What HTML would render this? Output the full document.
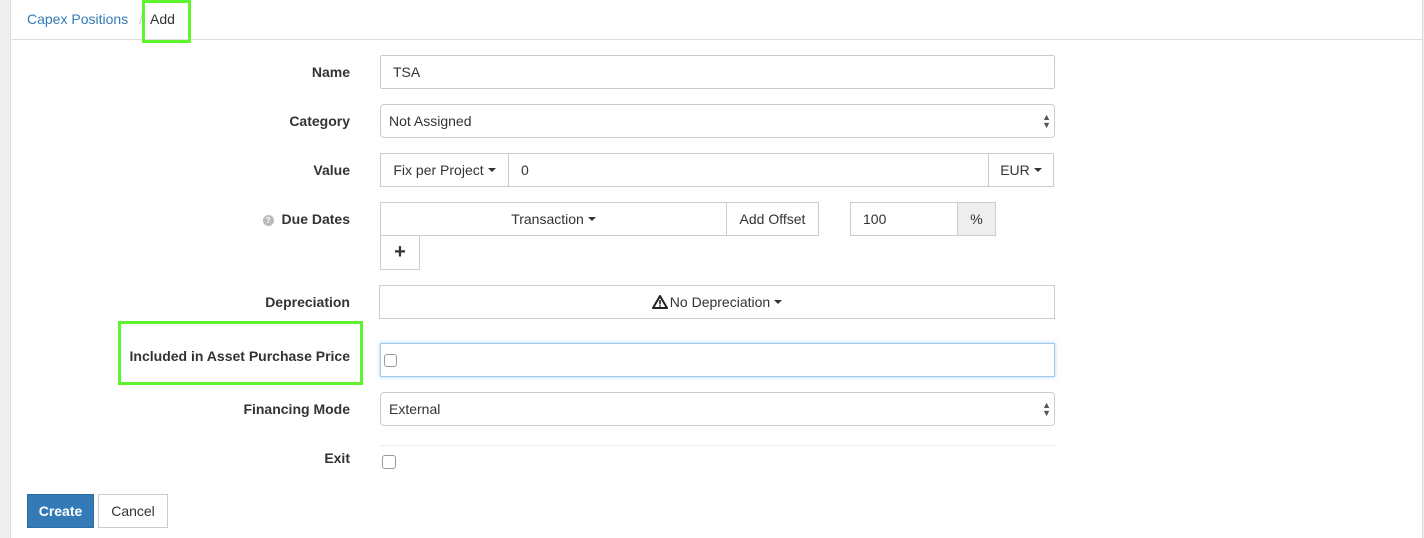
<!DOCTYPE html>
<html><head><style>
body{margin:0;width:1424px;height:538px;background:#fff;font-family:"Liberation Sans",Arial,sans-serif;font-size:14px;color:#333;position:relative;overflow:hidden}
.a{position:absolute;box-sizing:border-box}
.lbl{position:absolute;right:1074px;font-weight:bold;text-align:right;white-space:nowrap}
.bx{position:absolute;box-sizing:border-box;border:1px solid #ccc;background:#fff;display:flex;align-items:center}
.car{display:inline-block;width:0;height:0;border-left:4px solid transparent;border-right:4px solid transparent;border-top:4px solid #333;margin-left:4px;vertical-align:middle}
.sel{border-radius:4px;padding-left:8px}
.arr{position:absolute;right:3px;top:8px;font-size:9px;line-height:8px;color:#555}
.green{position:absolute;box-sizing:border-box;border:3px solid #5ef52e}
</style></head><body>
<div class="a" style="left:0;top:0;width:11px;height:538px;background:#eee;border-right:1px solid #ddd"></div>
<div class="a" style="left:1422px;top:0;width:2px;height:538px;background:#eee;border-left:1px solid #ddd"></div>
<div class="a" style="left:12px;top:39px;width:1410px;height:1px;background:#ddd"></div>
<div class="a" style="left:27px;top:11px;color:#337ab7">Capex Positions</div>
<div class="a" style="left:139px;top:11px;color:#ccc">/</div>
<div class="a" style="left:150px;top:11px;color:#333">Add</div>
<div class="green" style="left:142px;top:0;width:49px;height:43px"></div>

<div class="lbl" style="top:64px">Name</div>
<div class="bx" style="left:380px;top:55px;width:675px;height:34px;padding-left:12px;border-radius:2px">TSA</div>

<div class="lbl" style="top:113px">Category</div>
<div class="bx sel" style="left:380px;top:104px;width:675px;height:34px">Not Assigned<div class="arr">▲<br>▼</div></div>

<div class="lbl" style="top:162px">Value</div>
<div class="bx" style="left:380px;top:153px;width:129px;height:34px;justify-content:center">Fix per Project<span class="car"></span></div>
<div class="bx" style="left:508px;top:153px;width:481px;height:34px;padding-left:12px">0</div>
<div class="bx" style="left:988px;top:153px;width:66px;height:34px;justify-content:center">EUR<span class="car"></span></div>

<div class="lbl" style="top:211px"><span style="display:inline-block;width:11px;height:11px;border-radius:50%;background:#bbb;color:#fff;font-size:8px;line-height:11px;text-align:center;margin-right:8px;vertical-align:1px">?</span>Due Dates</div>
<div class="bx" style="left:380px;top:202px;width:347px;height:34px;justify-content:center">Transaction<span class="car"></span></div>
<div class="bx" style="left:726px;top:202px;width:93px;height:34px;justify-content:center">Add Offset</div>
<div class="bx" style="left:850px;top:202px;width:108px;height:34px;padding-left:12px">100</div>
<div class="bx" style="left:957px;top:202px;width:39px;height:34px;justify-content:center;background:#eee">%</div>
<div class="bx" style="left:380px;top:235px;width:40px;height:35px;justify-content:center;font-weight:bold;font-size:20px">+</div>

<div class="lbl" style="top:294px">Depreciation</div>
<div class="bx" style="left:379px;top:285px;width:676px;height:34px;justify-content:center"><svg width="16" height="14" viewBox="0 0 16 14" style="margin-right:2px"><path d="M8 1L15 13H1Z" fill="none" stroke="#222" stroke-width="2" stroke-linejoin="round"/><rect x="7.2" y="5" width="1.6" height="4.5" fill="#222"/><rect x="7.2" y="10.3" width="1.6" height="1.5" fill="#222"/></svg>No Depreciation<span class="car"></span></div>

<div class="lbl" style="top:348px">Included in Asset Purchase Price</div>
<div class="green" style="left:118px;top:321px;width:245px;height:64px"></div>
<div class="bx" style="left:380px;top:343px;width:675px;height:34px;border-color:#9ec8ee;box-shadow:0 0 4px rgba(102,175,233,.5)"><span style="position:absolute;left:3px;top:10px;width:13px;height:13px;border:1px solid #999;border-radius:3px;box-sizing:border-box"></span></div>

<div class="lbl" style="top:401px">Financing Mode</div>
<div class="bx sel" style="left:380px;top:392px;width:675px;height:34px">External<div class="arr">▲<br>▼</div></div>

<div class="lbl" style="top:450px">Exit</div>
<div class="a" style="left:380px;top:445px;width:675px;height:1px;background:#eee"></div>
<div class="a" style="left:382px;top:455px;width:14px;height:14px;border:1px solid #999;border-radius:3px"></div>

<div class="a" style="left:27px;top:494px;width:67px;height:34px;background:#337ab7;border:1px solid #2e6da4;color:#fff;text-align:center;line-height:32px;font-weight:bold">Create</div>
<div class="a" style="left:98px;top:494px;width:70px;height:34px;background:#fff;border:1px solid #ccc;text-align:center;line-height:32px">Cancel</div>
</body></html>
